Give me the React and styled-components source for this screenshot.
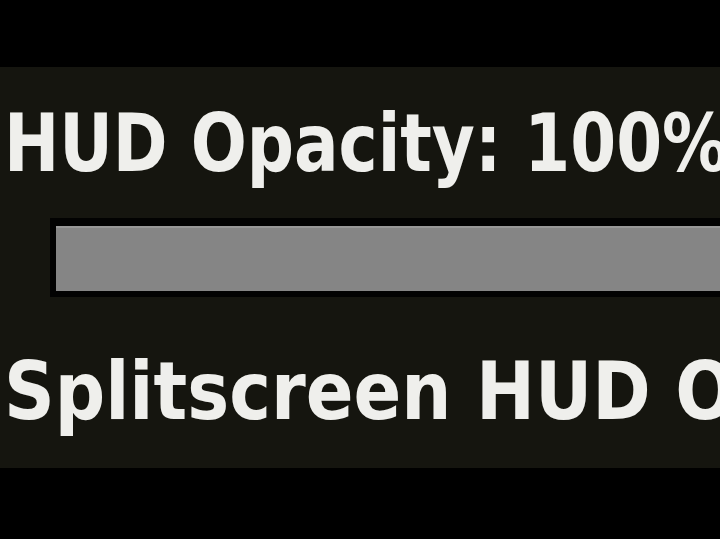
import React from 'react'
import styled, { createGlobalStyle } from 'styled-components'

const GlobalStyle = createGlobalStyle`
  html, body {
    margin: 0;
    padding: 0;
    background: #000;
  }
`

function App() {
  return (
    <>
      <GlobalStyle />
      <Screen>
        <Panel>
          <OptionLabel $stretch={0.815}>HUD Opacity: 100%</OptionLabel>
          <SliderTrack>
            <SliderFill />
          </SliderTrack>
          <OptionLabel $stretch={0.87} $gap={54}>
            Splitscreen HUD Opacity: 100%
          </OptionLabel>
        </Panel>
      </Screen>
    </>
  )
}

export default App

const Screen = styled.main`
  height: 539px;
  width: 720px;
  padding-top: 67px;
  box-sizing: border-box;
  background: #000;
  overflow: hidden;
`

const Panel = styled.section`
  height: 401px;
  background: #15150f;
  padding: 36px 0 0 4px;
  box-sizing: border-box;
  display: flex;
  flex-direction: column;
  overflow: hidden;
`

const OptionLabel = styled.div`
  margin-top: ${p => p.$gap || 0}px;
  font-family: "DejaVu Sans", sans-serif;
  font-weight: bold;
  font-size: 81px;
  line-height: 81px;
  color: #efefec;
  white-space: nowrap;
  transform: scaleX(${p => p.$stretch});
  transform-origin: left center;
`

const SliderTrack = styled.div`
  margin: 34px 0 0 46px;
  height: 79px;
  padding: 8px 0 6px 6px;
  box-sizing: border-box;
  background: #020202;
`

const SliderFill = styled.div`
  height: 100%;
  background: #858585;
  border-top: 2px solid #979797;
  box-sizing: border-box;
`
